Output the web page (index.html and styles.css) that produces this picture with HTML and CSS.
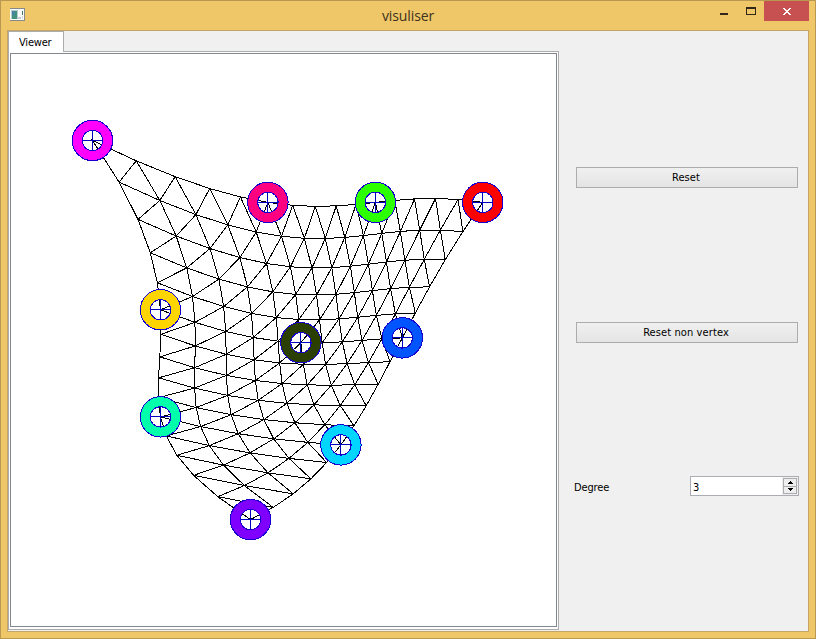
FILE: index.html
```html
<!DOCTYPE html>
<html lang="en">
<head>
<meta charset="utf-8">
<title>visuliser</title>
<link rel="stylesheet" href="styles.css">
</head>
<body>
<div class="window">
  <header class="titlebar">
    <svg class="app-icon" width="16" height="14" viewBox="0 0 16 14" shape-rendering="crispEdges">
      <rect x="0" y="0" width="15" height="13" fill="#858b89"/>
      <rect x="0" y="1" width="14" height="11" fill="#fafafa"/>
      <rect x="1" y="2" width="7" height="9" fill="#b5cdd0"/>
      <rect x="2" y="3" width="5" height="8" fill="#43917f"/>
      <rect x="2" y="3" width="3" height="4" fill="#4a83a0"/>
      <rect x="8" y="9" width="3" height="2" fill="#c5cbd0"/>
      <rect x="12" y="3" width="1" height="4" fill="#427764"/>
      <rect x="12" y="8" width="1" height="3" fill="#d6d9da"/>
    </svg>
    <h1 class="title">visuliser</h1>
    <div class="controls">
      <svg class="minmax" width="44" height="20" viewBox="0 0 44 20" shape-rendering="crispEdges">
        <rect x="0" y="12" width="8" height="2" fill="#30271a"/>
        <path d="M26 6h10v8H26zM27 8v5h8V8z" fill="#30271a" fill-rule="evenodd"/>
      </svg>
      <div class="close">
        <svg width="8" height="7" viewBox="0 0 8 7" shape-rendering="crispEdges">
          <path fill="#fff" d="M0 0h2v1h1v1h2V1h1V0h2v1H7v1H6v1H5v1h1v1h1v1h1v1H6V6H5V5H3v1H2v1H0V6h1V5h1V4h1V3H2V2H1V1H0z"/>
        </svg>
      </div>
    </div>
  </header>
  <main class="client">
    <section class="tabs">
      <div class="tabbar"><div class="tab">Viewer</div><div class="tabline"></div></div>
      <div class="pane">
        <svg class="canvas" width="545" height="572" viewBox="11 54 545 572" shape-rendering="crispEdges">
          <path id="mesh" fill="none" stroke="#000"/>
          <g id="handles"></g>
        </svg>
      </div>
    </section>
    <aside class="panel">
      <div class="cell"><button class="btn">Reset</button></div>
      <div class="cell"><button class="btn">Reset non vertex</button></div>
      <div class="cell degree">
        <span class="label">Degree</span>
        <div class="spin">
          <span class="value">3</span>
          <div class="steps">
            <div class="step"><svg width="5" height="3" viewBox="0 0 5 3" shape-rendering="crispEdges"><path d="M2 0h1v1h1v1h1v1H0V2h1V1h1z"/></svg></div>
            <div class="step"><svg width="5" height="3" viewBox="0 0 5 3" shape-rendering="crispEdges"><path d="M0 0h5v1H4v1H3v1H2V2H1V1H0z"/></svg></div>
          </div>
        </div>
      </div>
    </aside>
  </main>
</div>
<script src="mesh.js"></script>
</body>
</html>
```
FILE: styles.css
```css
* { box-sizing: border-box; }
body {
  margin: 0;
  font-family: "DejaVu Sans Condensed", "DejaVu Sans", sans-serif;
  font-stretch: condensed;
  font-size: 11px;
  color: #000;
}
.window {
  width: 816px;
  height: 639px;
  display: flex;
  flex-direction: column;
  padding: 0 6px 6px;
  background: #efc769;
  border: 1px solid #b99851;
}
.titlebar {
  height: 29px;
  flex: none;
  display: grid;
  grid-template-columns: 90px 1fr 90px;
  align-items: start;
}
.app-icon { margin: 7px 0 0 3px; }
.title {
  margin: 0;
  padding-top: 5px;
  text-align: center;
  font: 14px/20px "Open Sans", sans-serif;
  letter-spacing: -0.1px;
  color: #3d311c;
}
.controls { display: flex; justify-content: flex-end; }
.minmax { flex: none; }
.close {
  width: 45px;
  height: 20px;
  flex: none;
  display: flex;
  align-items: center;
  justify-content: center;
  background: #c75050;
}
.client {
  flex: 1;
  display: flex;
  background: #f0f0f0;
  border: 1px solid #c3a56a;
}
.tabs { width: 551px; display: flex; flex-direction: column; padding-bottom: 1px; }
.tabbar { height: 21px; display: flex; flex: none; }
.tab {
  width: 56px;
  line-height: 21px;
  padding-left: 10px;
  letter-spacing: -0.2px;
  background: #fff;
  border: solid #acacac;
  border-width: 1px 1px 0;
}
.tabline { flex: 1; border-bottom: 1px solid #acacac; }
.pane {
  flex: 1;
  background: #fff;
  border: solid #acacac;
  border-width: 0 1px 1px;
  padding: 1px;
}
.canvas {
  display: block;
  box-sizing: content-box;
  border: 1px solid #828790;
}
.panel {
  width: 249px;
  display: grid;
  grid-template-rows: 155px 155px 152px;
  align-content: start;
  padding: 69px 9px 0 15px;
}
.cell { display: flex; align-items: center; padding-left: 2px; }
.btn {
  width: 222px;
  height: 21px;
  padding: 0 2px 0 0;
  font: inherit;
  color: inherit;
  letter-spacing: 0.1px;
  border: 1px solid #acacac;
  background: linear-gradient(#f0f0f0, #e4e4e4);
}
.degree { justify-content: space-between; padding: 0; }
.label { letter-spacing: -0.15px; padding-top: 2px; }
.spin {
  width: 109px;
  height: 20px;
  display: flex;
  justify-content: space-between;
  background: #fff;
  border: 1px solid #abadb3;
}
.value { line-height: 21px; padding-left: 2px; }
.steps { width: 16px; padding: 1px; background: #efefef; display: flex; flex-direction: column; }
.step {
  flex: 1;
  display: flex;
  align-items: center;
  justify-content: center;
  border: 1px solid #acacac;
  background: #eee;
}
.step + .step { border-top: 0; }
```
FILE: mesh.js
```js
// Cubic triangular patch that passes through each of its ten handles.
// Each handle: barycentric index (a, b, c), position, colour.
const handles = [
  [3, 0, 0, 92.5, 140.5, "#ff00ff"],
  [2, 1, 0, 267.9, 202.4, "#ff0080"],
  [1, 2, 0, 375.4, 202.4, "#2bff00"],
  [0, 3, 0, 482.8, 202.4, "#ff0000"],
  [2, 0, 1, 160.5, 309.8, "#ffd500"],
  [1, 1, 1, 300.9, 342.7, "#2b4000"],
  [0, 2, 1, 402.3, 337.9, "#0055ff"],
  [1, 0, 2, 160.5, 416.9, "#00ffaa"],
  [0, 1, 2, 340.9, 444.9, "#00d5ff"],
  [0, 0, 3, 250.5, 519.6, "#8000ff"]
];
const steps = 15;

function basis(k, t) {
  let r = 1;
  for (let m = 0; m < k; m++) r *= (3 * t - m) / (m + 1);
  return r;
}

function point(i, j) {
  const u = i / steps, v = j / steps, w = 1 - u - v;
  let x = 0, y = 0;
  for (const [a, b, c, px, py] of handles) {
    const f = basis(a, w) * basis(b, u) * basis(c, v);
    x += f * px;
    y += f * py;
  }
  return x.toFixed(2) + " " + y.toFixed(2);
}

let d = "";
for (let j = 0; j < steps; j++) {
  for (let i = 0; i + j < steps; i++) {
    d += "M" + point(i, j) + "L" + point(i + 1, j) + "L" + point(i, j + 1) + "Z";
  }
}
document.getElementById("mesh").setAttribute("d", d);

document.getElementById("handles").innerHTML = handles.map(([a, b, c, x, y, color]) =>
  `<circle cx="${x}" cy="${y}" r="15.2" fill="none" stroke="${color}" stroke-width="10"/>
   <circle cx="${x}" cy="${y}" r="20.2" fill="none" stroke="#1500d0"/>
   <circle cx="${x}" cy="${y}" r="10.2" fill="none" stroke="#1500d0"/>
   <path d="M${x - 10} ${y}H${x + 10}M${x} ${y - 10}V${y + 10}" stroke="#0000c0"/>`
).join("");
```
